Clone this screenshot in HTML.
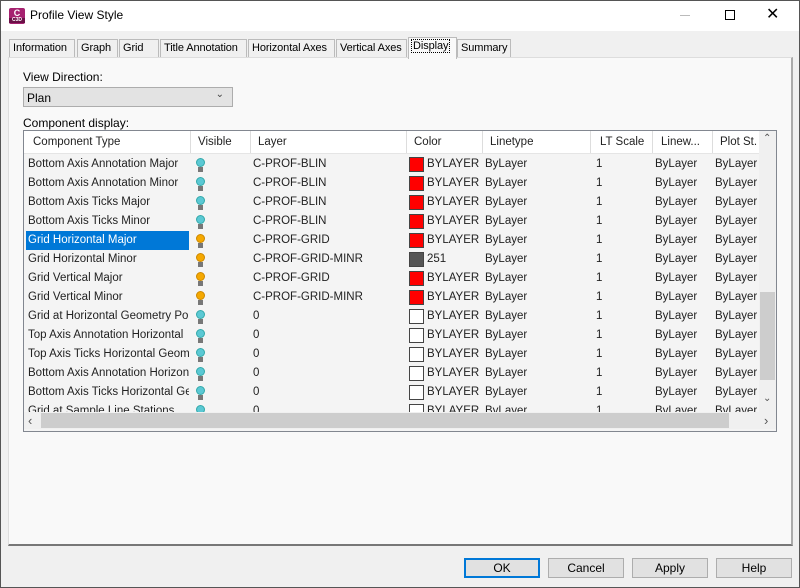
<!DOCTYPE html>
<html><head><style>
*{box-sizing:border-box;margin:0;padding:0}
body{width:800px;height:588px;overflow:hidden;background:#f0f0f0;font-family:"Liberation Sans",sans-serif;font-size:12px;color:#000;position:relative}
.a{position:absolute}
.win{position:absolute;left:0;top:0;width:800px;height:588px;border:1px solid #555}
.tb{left:1px;top:1px;width:798px;height:30px;background:#fff}
.tab{position:absolute;top:39px;height:19px;background:#f0f0f0;border:1px solid #bbb;border-bottom:none;padding:2px 0 0 3px;white-space:nowrap;font-size:11px;letter-spacing:-0.1px;overflow:hidden}
.cell{position:absolute;white-space:nowrap;overflow:hidden;line-height:19px;color:#222;font-size:11.5px}
.hd{position:absolute;top:0;height:22px;line-height:22px;border-right:1px solid #ddd;padding-left:9px;color:#222;background:#fff;font-size:11.5px;white-space:nowrap;overflow:hidden}
.bulb{position:absolute;width:9px;height:9px;border-radius:50%}
.stem{position:absolute;width:5px;height:5px;background:#777}
.sw{position:absolute;width:15px;height:15px;border:1px solid #444}
.btn{position:absolute;top:558px;width:76px;height:20px;background:#e1e1e1;border:1px solid #adadad;text-align:center;line-height:18px}
</style></head><body>
<div class="win"></div>
<div class="a tb"></div>
<div class="a" style="left:9px;top:8px;width:16px;height:16px;background:#a5216f;border-radius:2px;color:#fff;font-size:9px;font-weight:bold;text-align:center;line-height:10px">C<div style="font-size:5px;line-height:5px;background:#6b1047">C3D</div></div>
<div class="a" style="left:30px;top:8px;font-size:12px">Profile View Style</div>
<div class="a" style="left:680px;top:15px;width:10px;height:1px;background:#bbb"></div>
<div class="a" style="left:725px;top:10px;width:10px;height:10px;border:1px solid #000"></div>
<div class="a" style="left:766px;top:5px;font-size:16px;line-height:20px">✕</div>

<div class="tab" style="left:9px;width:66px">Information</div>
<div class="tab" style="left:77px;width:41px">Graph</div>
<div class="tab" style="left:119px;width:40px">Grid</div>
<div class="tab" style="left:160px;width:87px">Title Annotation</div>
<div class="tab" style="left:248px;width:87px">Horizontal Axes</div>
<div class="tab" style="left:336px;width:71px">Vertical Axes</div>
<div class="tab" style="left:457px;width:54px">Summary</div>
<div class="a" style="left:8px;top:57px;width:785px;height:489px;background:#f9f9f9;border:1px solid #ddd;border-bottom:2px solid #777;border-right:2px solid #aaa"></div>
<div class="tab" style="left:408px;top:37px;width:49px;height:22px;background:#f9f9f9;border-bottom:none;z-index:2"><span style="outline:1px dotted #000;padding:0 1px">Display</span></div>

<div class="a" style="left:23px;top:70px">View Direction:</div>
<div class="a" style="left:23px;top:87px;width:210px;height:20px;background:#e3e3e3;border:1px solid #adadad;padding:3px 0 0 3px">Plan<span style="position:absolute;right:8px;top:1px;font-size:10px;color:#444">&#8964;</span></div>
<div class="a" style="left:23px;top:116px">Component display:</div>

<div class="a" style="left:23px;top:130px;width:754px;height:302px;border:1px solid #828790;background:#f4f4f4;overflow:hidden">
 <div class="a" style="left:0;top:0;width:735px;height:281px;overflow:hidden">
  <div class="hd" style="left:0;width:167px">Component Type</div>
  <div class="hd" style="left:167px;width:60px;padding-left:7px">Visible</div>
  <div class="hd" style="left:227px;width:156px;padding-left:7px">Layer</div>
  <div class="hd" style="left:383px;width:76px;padding-left:7px">Color</div>
  <div class="hd" style="left:459px;width:108px;padding-left:7px">Linetype</div>
  <div class="hd" style="left:567px;width:62px;padding-left:9px">LT Scale</div>
  <div class="hd" style="left:629px;width:60px;padding-left:8px">Linew...</div>
  <div class="hd" style="left:689px;width:50px;padding-left:7px">Plot St.</div>
  <div class="a" style="left:0;top:22px;width:735px;height:1px;background:#e5e5e5"></div>
  <div id="rows"></div>
 </div>
 <div class="a" style="left:735px;top:0;width:17px;height:281px;background:#f0f0f0">
  <div class="a" style="left:4px;top:2px;font-size:10px;color:#555">&#8963;</div>
  <div class="a" style="left:1px;top:161px;width:15px;height:88px;background:#cdcdcd"></div>
  <div class="a" style="left:4px;top:262px;font-size:10px;color:#555">&#8964;</div>
 </div>
 <div class="a" style="left:0;top:281px;width:752px;height:17px;background:#f0f0f0">
  <div class="a" style="left:4px;top:1px;font-size:13px;color:#555">&lsaquo;</div>
  <div class="a" style="left:17px;top:1px;width:688px;height:15px;background:#cdcdcd"></div>
  <div class="a" style="left:740px;top:1px;font-size:13px;color:#555">&rsaquo;</div>
 </div>
</div>

<div class="btn" style="left:464px;border:2px solid #0078d7;line-height:16px">OK</div>
<div class="btn" style="left:548px">Cancel</div>
<div class="btn" style="left:632px">Apply</div>
<div class="btn" style="left:716px">Help</div>

<script>
var d=[["Bottom Axis Annotation Major","c","C-PROF-BLIN","r","BYLAYER"],
["Bottom Axis Annotation Minor","c","C-PROF-BLIN","r","BYLAYER"],
["Bottom Axis Ticks Major","c","C-PROF-BLIN","r","BYLAYER"],
["Bottom Axis Ticks Minor","c","C-PROF-BLIN","r","BYLAYER"],
["Grid Horizontal Major","o","C-PROF-GRID","r","BYLAYER"],
["Grid Horizontal Minor","o","C-PROF-GRID-MINR","g","251"],
["Grid Vertical Major","o","C-PROF-GRID","r","BYLAYER"],
["Grid Vertical Minor","o","C-PROF-GRID-MINR","r","BYLAYER"],
["Grid at Horizontal Geometry Points","c","0","w","BYLAYER"],
["Top Axis Annotation Horizontal","c","0","w","BYLAYER"],
["Top Axis Ticks Horizontal Geometry","c","0","w","BYLAYER"],
["Bottom Axis Annotation Horizontal","c","0","w","BYLAYER"],
["Bottom Axis Ticks Horizontal Geometry","c","0","w","BYLAYER"],
["Grid at Sample Line Stations","c","0","w","BYLAYER"]];
var h="";
d.forEach(function(r,i){var t=24+i*19;
var sel=i==4;
h+='<div class="cell" style="left:2px;top:'+t+'px;width:163px;padding-left:2px;'+(sel?'background:#0078d7;color:#fff':'')+'">'+r[0]+'</div>';
var bc=r[1]=="c"?"#5bc8d4":"#f5a800";
h+='<div class="bulb" style="left:172px;top:'+(t+3)+'px;background:'+bc+';border:1px solid '+(r[1]=="c"?"#3aa":"#c80")+'"></div><div class="stem" style="left:174px;top:'+(t+12)+'px"></div>';
h+='<div class="cell" style="left:229px;top:'+t+'px">'+r[2]+'</div>';
var sc=r[3]=="r"?"#f00":r[3]=="g"?"#555":"#fff";
h+='<div class="sw" style="left:385px;top:'+(t+2)+'px;background:'+sc+'"></div>';
h+='<div class="cell" style="left:403px;top:'+t+'px">'+r[4]+'</div>';
h+='<div class="cell" style="left:461px;top:'+t+'px">ByLayer</div>';
h+='<div class="cell" style="left:572px;top:'+t+'px">1</div>';
h+='<div class="cell" style="left:631px;top:'+t+'px">ByLayer</div>';
h+='<div class="cell" style="left:691px;top:'+t+'px">ByLayer</div>';
});
document.getElementById("rows").innerHTML=h;
</script>
</body></html>
